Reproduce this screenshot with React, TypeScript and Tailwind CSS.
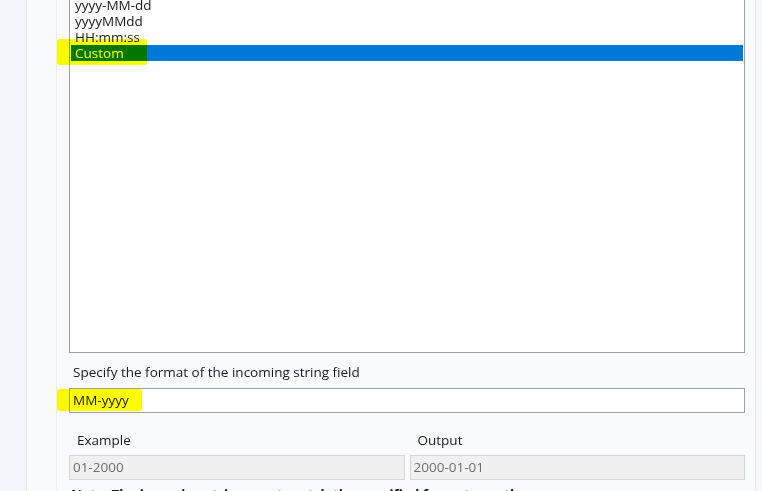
const formats = ["yyyy-MM-dd", "yyyyMMdd", "HH:mm:ss", "Custom"];

function Field({ value }: { value: string }) {
  return (
    <div className="h-[25px] flex-1 border border-[#d6d6d6] bg-[#f0f0f0] px-[3px] flex items-center text-[#6d6d6d]">
      {value}
    </div>
  );
}

export default function App() {
  return (
    <div
      className="relative w-[762px] h-[491px] overflow-hidden flex bg-[#f9fafc] text-[13.5px] text-[#1a1a1a]"
      style={{ fontFamily: '"Open Sans", "Noto Sans", sans-serif' }}
    >
      <div className="w-[27px] shrink-0 bg-[#f3f6fb] border-r border-[#e2e6ee]" />
      <div className="w-[30px] shrink-0 border-r border-[#eceef3]" />
      <div className="flex-1 flex flex-col pl-[12px] pr-[10px]">
        {/* list box */}
        <div className="shrink-0 mt-[-5px] h-[358px] border border-[#a0a0a0] bg-white pt-px px-px">
          {formats.map((f) => (
            <div
              key={f}
              className={`h-[16px] leading-[16px] pl-[4px] ${
                f === "Custom" ? "bg-[#0078d7] text-white" : ""
              }`}
            >
              {f}
            </div>
          ))}
        </div>

        <div className="shrink-0 mt-[11px] pl-[4px] leading-[16px]">
          Specify the format of the incoming string field
        </div>
        <div className="shrink-0 mt-[8px] h-[25px] border border-[#a0a0a0] bg-white px-[3px] flex items-center">
          MM-yyyy
        </div>

        <div className="shrink-0 mt-[19px] flex gap-[5px] leading-[16px]">
          <div className="flex-1 pl-[8px]">Example</div>
          <div className="flex-1 pl-[8px]">Output</div>
        </div>
        <div className="shrink-0 mt-[7px] flex gap-[5px]">
          <Field value="01-2000" />
          <Field value="2000-01-01" />
        </div>
        <div className="shrink-0 mt-[7px] pl-[2px] font-bold leading-[16px] whitespace-nowrap">
          Note: The incoming string must match the specified format exactly.
        </div>
      </div>
      <div className="w-[7px] shrink-0 border-l border-[#dde3ef] bg-[#f6f8fc]" />

      {/* highlighter marks */}
      <div className="absolute left-[57px] top-[39px] w-[90px] h-[26px] rounded-[3px] bg-[#ffff00] mix-blend-multiply" />
      <div className="absolute left-[57px] top-[389px] w-[85px] h-[22px] rounded-[3px] bg-[#ffff00] mix-blend-multiply" />
    </div>
  );
}
